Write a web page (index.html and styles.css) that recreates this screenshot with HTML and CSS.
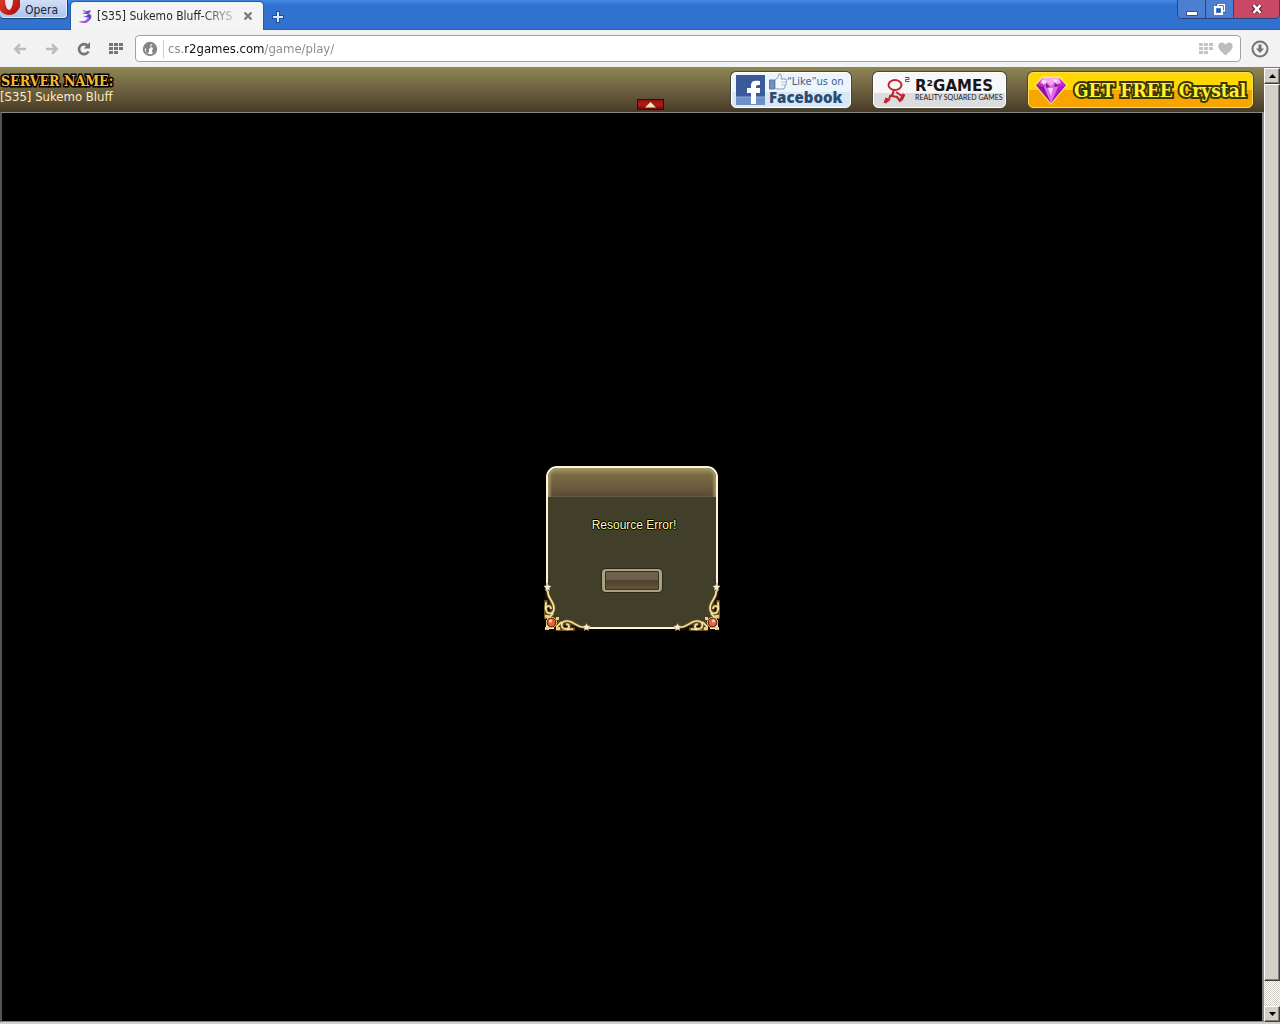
FILE: index.html
```html
<!DOCTYPE html>
<html lang="en">
  <head>
    <meta charset="UTF-8" />
    <meta name="viewport" content="width=device-width, initial-scale=1.0" />
    <title>[S35] Sukemo Bluff-CRYS</title>
    <link rel="stylesheet" href="styles.css">
  </head>
  <body>
    <div class="titlebar">
      <button class="opera-btn" type="button">
        <svg width="20" height="16" viewBox="0 0 20 16">
          <defs>
            <linearGradient id="operaRed" x1="0" y1="0" x2="1" y2="1">
              <stop offset="0" stop-color="#f0503c" />
              <stop offset="1" stop-color="#a80808" />
            </linearGradient>
          </defs>
          <ellipse cx="9" cy="1" rx="12" ry="14" fill="url(#operaRed)" />
          <ellipse cx="9" cy="-1" rx="4" ry="11" fill="#e6ebf7" />
        </svg>
        <span>Opera</span>
      </button>
      <div class="tab">
        <svg class="tab-icon" width="14" height="14" viewBox="0 0 14 14">
          <path d="M3 1c2 0 3 1 5 1 2 0 3-1 4-1-1 2-1 3-3 4 3 0 4 2 3 4-1 3-4 4-6 3 2 0 4-1 4-3-1-1-4-1-6-1 2-1 4-1 5-3-2 0-4 0-6-1 2 0 3 0 4-1z" fill="#5a49c8" />
          <path d="M0 12c4 1 8 0 9-4 2 2 1 5-2 6-3 0-6 0-7-2z" fill="#a55be0" />
          <path d="M4 1l4 2-3 1z" fill="#e87ab4" />
        </svg>
        <span class="tab-title">[S35] Sukemo Bluff-CRYS</span>
        <button class="tab-close" type="button" aria-label="Close tab">
          <svg width="10" height="10" viewBox="0 0 10 10"><path d="M1.500 1.500l7 7M8.500 1.500l-7 7" stroke="#777" stroke-width="2.200" /></svg>
        </button>
      </div>
      <button class="new-tab" type="button" aria-label="New tab">
        <svg width="12" height="12" viewBox="0 0 12 12"><path d="M6 0v12M0 6h12" stroke="#1e4f9e" stroke-width="4" /><path d="M6 1v10M1 6h10" stroke="#dce9fb" stroke-width="2" /></svg>
      </button>
      <div class="window-btns">
        <button class="win-btn" type="button" aria-label="Minimize">
          <svg width="14" height="14" viewBox="0 0 14 14"><path d="M1.500 9.500h11v4h-11z" fill="#fff" stroke="#31518c" /></svg>
        </button>
        <button class="win-btn" type="button" aria-label="Restore">
          <svg width="12" height="12" viewBox="0 0 12 12" fill="none"><path d="M4 3V1.500h6.500V8H9" stroke="#31518c" stroke-width="3" /><path d="M4 3V1.500h6.500V8H9" stroke="#fff" stroke-width="1.500" /><path d="M1 4h7v7H1z" fill="#4c7fd0" stroke="#fff" stroke-width="2" /><path d="M3.500 6.500h2v2h-2z" stroke="#23467e" /></svg>
        </button>
        <button class="win-btn win-close" type="button" aria-label="Close">
          <svg width="12" height="10" viewBox="0 0 12 10"><path d="M2 1l8 8M10 1L2 9" stroke="#642336" stroke-width="4.500" /><path d="M2.500 1l7 8M9.500 1l-7 8" stroke="#fff" stroke-width="2.600" /></svg>
        </button>
      </div>
    </div>

    <div class="toolbar">
      <button class="tool-btn" type="button" aria-label="Back">
        <svg width="14" height="12" viewBox="0 0 16 14" fill="none" stroke="#bbb" stroke-width="3"><path d="M15 7H3M8 1.500L2.500 7 8 12.500" /></svg>
      </button>
      <button class="tool-btn" type="button" aria-label="Forward">
        <svg width="14" height="12" viewBox="0 0 16 14" fill="none" stroke="#bbb" stroke-width="3"><path d="M1 7h12M8 1.500L13.500 7 8 12.500" /></svg>
      </button>
      <button class="tool-btn" type="button" aria-label="Reload">
        <svg width="14" height="14" viewBox="0 0 14 14"><path d="M11.500 9.500A5 5 0 1 1 10.500 3.500" fill="none" stroke="#747474" stroke-width="2.600" /><path d="M13 0v6.500H6.800z" fill="#747474" /></svg>
      </button>
      <button class="tool-btn" type="button" aria-label="Speed dial">
        <svg width="14" height="12" viewBox="0 0 14 12"><path d="M0 1.500h14M0 5.500h14M0 9.500h9" stroke="#747474" stroke-width="3" stroke-dasharray="4 1" /></svg>
      </button>
      <div class="address">
        <svg width="16" height="16" viewBox="0 0 16 16"><circle cx="8" cy="8" r="6.200" fill="#fff" stroke="#858585" stroke-width="2" /><path d="M2 6l4-4 3 1-1 2 1 1-2 2v2l-1 3-2-2V8zM10 3l4 3v4l-3 3-1-3 1-3-2-1z" fill="#858585" /></svg>
        <input class="url-box" type="text" value="cs.r2games.com/game/play/" aria-label="Address" />
        <button class="address-btn" type="button" aria-label="Add to speed dial">
          <svg width="14" height="12" viewBox="0 0 14 12"><path d="M0 1.500h14M0 5.500h14M0 9.500h9" stroke="#c4c4c4" stroke-width="3" stroke-dasharray="4 1" /></svg>
        </button>
        <button class="address-btn" type="button" aria-label="Add to bookmarks">
          <svg width="15" height="14" viewBox="0 0 15 14"><path d="M7.500 13.500C4 10 .3 8 .3 4.300.3 1.800 1.900.5 3.900.5c1.800 0 3 1 3.600 2.400C8.100 1.500 9.300.5 11.100.5c2 0 3.600 1.300 3.600 3.800 0 3.700-3.700 5.700-7.200 9.200z" fill="#bdbdbd" /></svg>
        </button>
      </div>
      <button class="tool-btn download-btn" type="button" aria-label="Downloads">
        <svg width="18" height="18" viewBox="0 0 18 18"><circle cx="9" cy="9" r="7.500" fill="none" stroke="#747474" stroke-width="2" /><path d="M7.500 4.500h3v4H13l-4 4.500-4-4.500h2.500z" fill="#747474" /></svg>
      </button>
    </div>

    <div class="viewport">
      <div class="page">
        <header class="game-header">
          <div class="server">
            <div class="server-label">SERVER NAME:</div>
            <div class="server-name">[S35] Sukemo Bluff</div>
          </div>
          <button class="toggle-btn" type="button" aria-label="Hide bar">
            <svg width="11" height="6" viewBox="0 0 13 7"><path d="M6.500 0L13 6.500H0z" fill="#ffe0a8" /><path d="M6.500 1L9 4H4z" fill="#fff8dc" /></svg>
          </button>
          <a class="banner facebook" href="#">
            <svg width="29" height="30" viewBox="0 0 29 30">
              <path d="M0 0h29v30H0z" fill="#3c5a9a" />
              <path d="M0 22h29v8H0z" fill="#6d90c8" />
              <path d="M0 22h29" stroke="#8fabd8" />
              <path d="M15 29V18h-4v-5h4v-3c0-4 3-5 9-4v4c-3 0-4 0-4 2v1h4v5h-4v11z" fill="#fff" />
            </svg>
            <span class="fb-text">
              <span class="fb-like">
                <svg width="18" height="17" viewBox="0 0 18 17"><path d="M6 7c2-1 4-4 4-6 2-1 3 2 2 5h4c2 0 2 2 1 3 1 1 0 3-1 3 0 2 0 4-2 4H8l-2-1z" fill="#f4f7fb" stroke="#8196b5" /><path d="M.5 7h5v9h-5z" fill="#6e91c5" stroke="#6079a0" /><path d="M12 9h5M12 12h4" stroke="#b4c1d4" /></svg>“Like”us on
              </span>
              <strong class="fb-name">Facebook</strong>
            </span>
          </a>
          <a class="banner r2games" href="#">
            <svg width="28" height="28" viewBox="0 0 28 28">
              <g fill="none" stroke="#c1252f">
                <ellipse cx="12" cy="9" rx="6.500" ry="5" stroke-width="2" />
                <path d="M11 14l-2 6 5 1 3 4 3-4" stroke-width="2.200" />
                <path d="M13 16l6 4M10 19l-3 1-1 4-3 2" stroke-width="2" />
                <path d="M4 22l-2 5M18 24l3-6" stroke-width="3.200" />
                <path d="M22 1.500h4v2h-3.500v2H26.500" stroke-width="1" />
              </g>
            </svg>
            <span class="r2-text">
              <strong class="r2-name">R²GAMES</strong>
              <span class="r2-sub">REALITY SQUARED GAMES</span>
            </span>
          </a>
          <a class="banner crystal" href="#">
            <svg width="34" height="30" viewBox="0 0 34 30">
              <path d="M8 1h18l8 9-17 20L0 10z" fill="#ffe86a" opacity=".8" />
              <path d="M9 3h16l7 7-15 18L2 10z" fill="#c628d6" />
              <path d="M9 3h16l2 5-10 3L6 8z" fill="#f3a8f3" />
              <path d="M2 10l8 2 7 16z" fill="#8c169f" />
              <path d="M32 10l-8 2-7 16z" fill="#a51cc0" />
              <path d="M10 12l3-5 4 4 4-5 3 6-7 16z" fill="#e269ea" />
              <path d="M8 5l5 1-4 4zM19 4l5 1-3 3zM14 13h5l-2 8z" fill="#fff" opacity=".7" />
              <path d="M12 8l4 4-4 1zM21 8l4 3-5 1z" fill="#8a1895" />
            </svg>
            <strong class="crystal-text">GET FREE Crystal</strong>
          </a>
        </header>

        <main class="stage">
          <div class="dialog">
            <div class="dialog-head"></div>
            <div class="dialog-body">
              <p class="message">Resource Error!</p>
              <button class="confirm-btn" type="button" aria-label="Confirm"></button>
            </div>
            <svg class="corner corner-left" width="48" height="48" viewBox="0 0 48 48">
              <g id="ornament">
                <path d="M3 9v28M10 45h30" fill="none" stroke="#0d0c06" stroke-width="5" />
                <g fill="none" stroke="#6e5424" stroke-width="3.400">
                  <path d="M4 8c-1 7 6 10 6 17 0 7-8 7-8 1 0-4 5-4 5 0M2 17c0 7-1 12 0 19M9 30c-1 3-4 3-5 6" />
                  <path d="M40 44c-7 1-10-6-17-6-7 0-7 8-1 8 4 0 4-5 0-5M31 46c-7 0-12 1-19 0M18 39c-3 1-3 4-6 5" />
                </g>
                <g fill="none" stroke="#f6e2a2" stroke-width="1.700">
                  <path d="M4 8c-1 7 6 10 6 17 0 7-8 7-8 1 0-4 5-4 5 0M2 19c0 4-1 6 0 8M9 30c-1 3-4 3-5 6" />
                  <path d="M40 44c-7 1-10-6-17-6-7 0-7 8-1 8 4 0 4-5 0-5M29 46c-4 0-6 1-8 0M18 39c-3 1-3 4-6 5" />
                </g>
                <path d="M1 32h4v3H1zM12 34h3v3h-3zM1 44h4v3H1zM12 44h4v3h-4z" fill="#f1cf72" />
                <circle cx="7.500" cy="39.500" r="5.200" fill="#5d2414" stroke="#e6be63" />
                <circle cx="7.500" cy="39.500" r="3.700" fill="#e86138" />
                <circle cx="6.500" cy="38" r="1.700" fill="#ffc3a0" />
                <path id="star" d="M3.500 0l1.200 2.600 2.800.3-2 2 .5 2.900-2.500-1.400L1 7.800l.5-2.900-2-2 2.800-.3z" fill="#fff2cf" stroke="#5b4626" stroke-width=".4" />
                <use href="#star" x="39" y="40" />
              </g>
            </svg>
            <svg class="corner corner-right" width="48" height="48" viewBox="0 0 48 48"><use href="#ornament" /></svg>
          </div>
        </main>
      </div>

      <div class="scrollbar">
        <button class="scroll-btn" type="button" aria-label="Scroll up">
          <svg width="7" height="4" viewBox="0 0 7 4"><path d="M3.500 0L7 4H0z" /></svg>
        </button>
        <div class="scroll-thumb"></div>
        <div class="scroll-track"></div>
        <button class="scroll-btn" type="button" aria-label="Scroll down">
          <svg width="7" height="4" viewBox="0 0 7 4"><path d="M0 0h7L3.500 4z" /></svg>
        </button>
      </div>
    </div>
  </body>
</html>
```

FILE: styles.css
```css
* {
  margin: 0;
  padding: 0;
  box-sizing: border-box;
}
body {
  height: 100vh;
  display: flex;
  flex-direction: column;
  overflow: hidden;
  background: #d4d0c8;
  font-family: "DejaVu Sans Condensed", "DejaVu Sans", sans-serif;
  font-size: 12px;
}
button {
  border: none;
  background: none;
  font: inherit;
}
svg {
  display: block;
  flex-shrink: 0;
}

/* title bar */
.titlebar {
  height: 30px;
  display: flex;
  align-items: flex-start;
  background: linear-gradient(#438be0, #3172d0 5px, #3172d0);
  border-bottom: 1px solid #2c5ca6;
}
.opera-btn {
  width: 68px;
  height: 19px;
  display: flex;
  gap: 5px;
  margin-right: 3px;
  border: 1px solid #1f3f78;
  border-width: 0 1px 1px 0;
  border-radius: 0 0 4px 4px;
  background: linear-gradient(#d2dff5, #a9c3ec);
  box-shadow: inset -1px -1px #e2ecfb;
  color: #1d2433;
  line-height: 20px;
  overflow: hidden;
}
.tab {
  width: 192px;
  height: 28px;
  margin-top: 2px;
  margin-bottom: -1px;
  padding: 0 8px;
  display: flex;
  align-items: center;
  gap: 4px;
  background: #f4f4f4;
  border-radius: 4px 4px 0 0;
  box-shadow: 0 0 1px 1px #2859a2;
  clip-path: inset(-2px -2px 0);
}
.tab-title {
  flex: 1;
  overflow: hidden;
  white-space: nowrap;
  background: linear-gradient(90deg, #222 75%, #ccc);
  background-clip: text;
  color: transparent;
}
.tab-close {
  width: 12px;
  margin-left: 4px;
}
.new-tab {
  margin: 11px 0 0 9px;
}
.window-btns {
  display: flex;
  margin-left: auto;
  height: 19px;
  border: 1px solid #27467e;
  border-top: none;
  border-radius: 0 0 5px 5px;
  overflow: hidden;
}
.win-btn {
  width: 28px;
  display: flex;
  justify-content: center;
  align-items: center;
  background: #4c7fd0;
  border-right: 1px solid #27467e;
}
.win-close {
  width: 45px;
  background: #c94964;
  border-right: none;
}

/* navigation bar */
.toolbar {
  height: 37px;
  display: flex;
  align-items: center;
  padding: 0 4px;
  background: #f2f2f2;
}
.tool-btn {
  width: 32px;
  height: 28px;
  display: flex;
  justify-content: center;
  align-items: center;
}
.address {
  flex: 1;
  height: 27px;
  margin-left: 3px;
  padding: 0 7px 0 6px;
  display: flex;
  align-items: center;
  gap: 5px;
  background: #fff;
  border: 1px solid #a2a2a2;
  border-radius: 4px;
}
/* the domain part of the url is darker than the rest */
.url-box {
  flex: 1;
  height: 18px;
  padding-left: 4px;
  border: none;
  border-left: 1px solid #ccc;
  outline: none;
  font: inherit;
  font-size: 13px;
  background: linear-gradient(90deg, #888 20px, #111 20px 101px, #888 101px);
  background-clip: text;
  color: transparent;
  caret-color: #111;
}
.download-btn {
  margin-left: 3px;
}

/* page area */
.viewport {
  flex: 1;
  display: flex;
  min-height: 0;
  border-bottom: 2px solid #d4d0c8;
}
.page {
  flex: 1;
  display: flex;
  flex-direction: column;
}
.game-header {
  height: 45px;
  display: flex;
  align-items: center;
  gap: 22px;
  padding-right: 11px;
  background: linear-gradient(#8f8755, #6d6140 50%, #483b26);
}
.server {
  align-self: flex-start;
  padding-top: 7px;
}
.server-label {
  padding-left: 1px;
  font-family: "DejaVu Serif Condensed", "DejaVu Serif", serif;
  font-size: 14px;
  font-weight: bold;
  line-height: 15px;
  color: #fdb827;
  -webkit-text-stroke: 3px #000;
  paint-order: stroke fill;
}
.server-name {
  color: #ffecc0;
  font-size: 13px;
  line-height: 16px;
}
.toggle-btn {
  width: 27px;
  height: 11px;
  margin: 0 45px 2px auto;
  align-self: flex-end;
  display: flex;
  justify-content: center;
  align-items: center;
  background: linear-gradient(#8d1513, #b01a18 50%, #760c0b);
  border: 1px solid #3a0906;
}
.banner {
  height: 36px;
  display: flex;
  align-items: center;
  border: 1px solid #fff;
  border-radius: 5px;
  box-shadow: 0 0 0 1px #4b4638;
  text-decoration: none;
  white-space: nowrap;
}
.facebook {
  width: 120px;
  padding-left: 4px;
  gap: 4px;
  background: linear-gradient(#edf4fc 55%, #d9e8f5 55%);
  color: #3d5d91;
}
.fb-text {
  display: flex;
  flex-direction: column;
}
.fb-like {
  height: 15px;
  display: flex;
  align-items: center;
  font-size: 11px;
}
.fb-name {
  color: #2c4b73;
  font-family: "Open Sans", sans-serif;
  font-size: 15px;
  font-weight: 800;
  line-height: 16px;
}
.r2games {
  width: 133px;
  padding-left: 9px;
  gap: 4px;
  background: linear-gradient(#f7f7f7 58%, #dcdcdc 58%);
  color: #161616;
}
.r2-text {
  display: flex;
  flex-direction: column;
}
.r2-name {
  font-family: "DejaVu Sans", sans-serif;
  font-size: 15px;
  line-height: 14px;
}
.r2-sub {
  font-family: Lato, sans-serif;
  font-size: 7px;
  line-height: 8px;
}
.crystal {
  width: 225px;
  padding-left: 5px;
  gap: 6px;
  border-color: #ffdf52;
  background: linear-gradient(#ffd800 50%, #f8a500 50%);
  color: #fff22b;
}
.crystal-text {
  font-family: "DejaVu Serif Condensed", "DejaVu Serif", serif;
  font-size: 19px;
  -webkit-text-stroke: 4px #3c3606;
  paint-order: stroke fill;
}

/* game stage */
.stage {
  flex: 1;
  display: flex;
  justify-content: center;
  align-items: center;
  padding-bottom: 40px;
  background: #000;
  border: 1px solid #888;
  border-left: 2px solid #555;
  border-right-width: 2px;
}
.dialog {
  position: relative;
  width: 172px;
  background: #413f2a;
  border: 2px solid #fff6d0;
  border-radius: 11px 11px 0 0;
}
.dialog-head {
  height: 29px;
  border-radius: 9px 9px 0 0;
  background: linear-gradient(#a29668, #7b6b43 25%, #65513a 85%, #4b432e);
  box-shadow: inset 3px 0 3px -1px #a99d78, inset -3px 0 3px -1px #a99d78;
}
.dialog-body {
  display: flex;
  flex-direction: column;
  align-items: center;
  padding: 20px 0 35px;
}
.message {
  padding-left: 4px;
  color: #ffffa8;
  font-family: "Liberation Sans", Arial, sans-serif;
  font-size: 12px;
  line-height: 16px;
  text-shadow: 1px 0 #000, -1px 0 #000, 0 1px #000, 0 -1px #000;
}
.confirm-btn {
  width: 60px;
  height: 23px;
  margin-top: 36px;
  border: 2px solid #aaa27e;
  border-left-width: 3px;
  border-right-width: 3px;
  border-radius: 4px;
  background: linear-gradient(#6d604c 50%, #504130 50%, #655640);
  box-shadow: 0 0 0 1px #29251a, inset 0 0 0 1px #3b3121;
}
.corner {
  position: absolute;
  bottom: -4px;
}
.corner-left {
  left: -4px;
}
.corner-right {
  right: -4px;
  transform: scaleX(-1);
}

/* scrollbar */
.scrollbar {
  width: 16px;
  display: flex;
  flex-direction: column;
  background: #e9e7e3;
  border-top: 1px solid #777;
}
.scroll-btn,
.scroll-thumb {
  background: #d4d0c8;
  border: 1px solid #fff;
  border-right-color: #404040;
  border-bottom-color: #404040;
  box-shadow: inset -1px -1px #808080;
}
.scroll-btn {
  height: 16px;
  display: flex;
  justify-content: center;
  align-items: center;
}
.scroll-thumb {
  flex: 36;
}
.scroll-track {
  flex: 1;
  background: repeating-conic-gradient(#d4d0c8 0 25%, #fff 0 50%) 0 0 / 2px 2px;
}
```
